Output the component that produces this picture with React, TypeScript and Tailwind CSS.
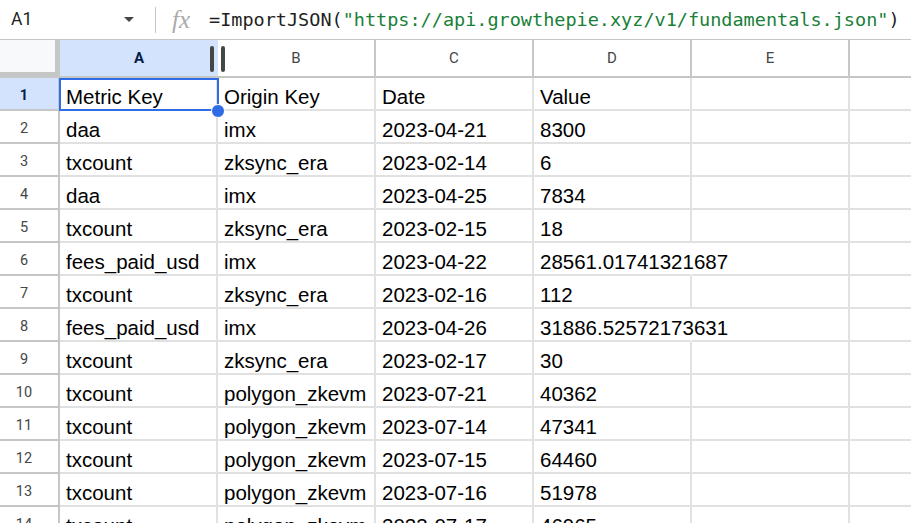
const rows: string[][] = [
  ['Metric Key', 'Origin Key', 'Date', 'Value'],
  ['daa', 'imx', '2023-04-21', '8300'],
  ['txcount', 'zksync_era', '2023-02-14', '6'],
  ['daa', 'imx', '2023-04-25', '7834'],
  ['txcount', 'zksync_era', '2023-02-15', '18'],
  ['fees_paid_usd', 'imx', '2023-04-22', '28561.01741321687'],
  ['txcount', 'zksync_era', '2023-02-16', '112'],
  ['fees_paid_usd', 'imx', '2023-04-26', '31886.52572173631'],
  ['txcount', 'zksync_era', '2023-02-17', '30'],
  ['txcount', 'polygon_zkevm', '2023-07-21', '40362'],
  ['txcount', 'polygon_zkevm', '2023-07-14', '47341'],
  ['txcount', 'polygon_zkevm', '2023-07-15', '64460'],
  ['txcount', 'polygon_zkevm', '2023-07-16', '51978'],
  ['txcount', 'polygon_zkevm', '2023-07-17', '46965'],
]

const columns = ['A', 'B', 'C', 'D', 'E']

function FormulaBar() {
  return (
    <div className="flex h-[40px] shrink-0 items-center border-b border-[#c4c7c5]">
      <div className="w-[124px] pl-[11px] text-[17.5px] text-[#1f1f1f] font-['Roboto',sans-serif]">A1</div>
      <svg width="10" height="5" viewBox="0 0 10 5" className="mb-[1px]">
        <path d="M0 0 L10 0 L5 5 Z" fill="#444746" />
      </svg>
      <div className="ml-[21px] h-[26px] w-px bg-[#c4c7c5]" />
      <span className="ml-[16px] w-[37px] font-['Liberation_Serif',serif] text-[25px] italic text-[#ababab] leading-none">
        fx
      </span>
      <div className="whitespace-nowrap font-['DejaVu_Sans_Mono',monospace] text-[18.5px] text-[#1f1f1f]">
        =ImportJSON(<span className="text-[#188038]">"https://api.growthepie.xyz/v1/fundamentals.json"</span>)
      </div>
    </div>
  )
}

function ColumnHeader() {
  return (
    <div className="flex h-[38px] shrink-0 font-['Roboto',sans-serif] text-[15px] text-[#444746]">
      <div className="w-[60px] shrink-0 border-r-[5px] border-b-[6px] border-[#c4c7c5] bg-[#f8f9fa]" />
      {columns.map(col => (
        <div
          key={col}
          className={
            col === 'A'
              ? 'relative flex w-[158px] shrink-0 items-center justify-center border-b-2 border-[#c4c7c5] bg-[#d3e3fd] font-bold text-[#041e49]'
              : 'flex w-[158px] shrink-0 items-center justify-center border-b-2 border-r-2 border-[#c4c7c5]'
          }
        >
          {col}
          {col === 'A' && (
            <>
              <div className="absolute left-[150px] top-[6px] h-[26px] w-[4px] rounded-full bg-[#444746]" />
              <div className="absolute left-[161px] top-[6px] z-10 h-[26px] w-[4px] rounded-full bg-[#444746]" />
            </>
          )}
        </div>
      ))}
      <div className="flex-1 border-b-2 border-[#c4c7c5]" />
    </div>
  )
}

function DataRow({ cells, index }: { cells: string[]; index: number }) {
  const first = index === 0
  return (
    <div className="flex h-[33px] shrink-0">
      <div
        className={
          first
            ? 'w-[60px] shrink-0 border-r-2 border-b-2 border-[#c4c7c5] bg-[#d3e3fd] pr-[10px] pt-[7px] text-center font-["Roboto",sans-serif] text-[14.5px] font-bold text-[#041e49]'
            : 'w-[60px] shrink-0 border-r-2 border-b-2 border-[#c4c7c5] pr-[10px] pt-[7px] text-center font-["Roboto",sans-serif] text-[14.5px] text-[#444746]'
        }
      >
        {index + 1}
      </div>
      {[0, 1, 2, 3, 4].map(c => {
        const text = cells[c] ?? ''
        const overflows = c === 3 && text.length > 10
        return (
          <div
            key={c}
            className={
              'relative w-[158px] shrink-0 whitespace-nowrap border-b-2 border-r-2 border-b-[#e1e1e1] pl-[6px] pt-[7px] font-["Liberation_Sans",Arial,sans-serif] text-[20.5px] leading-[24px] text-black ' +
              (overflows ? 'border-r-white' : 'border-r-[#e1e1e1]')
            }
          >
            <span className="relative z-[1]">{text}</span>
            {first && c === 0 && (
              <>
                <div className="absolute -left-[1px] top-0 h-[33px] w-[160px] border-2 border-[#2f6ce5]" />
                <div className="absolute left-[151px] top-[26px] z-10 h-[14px] w-[14px] rounded-full border border-white bg-[#2f6ce5]" />
              </>
            )}
          </div>
        )
      })}
      <div className="flex-1 border-b-2 border-[#e1e1e1]" />
    </div>
  )
}

export default function App() {
  return (
    <div className="flex h-[523px] w-[911px] flex-col overflow-hidden bg-white">
      <FormulaBar />
      <ColumnHeader />
      {rows.map((cells, i) => (
        <DataRow key={i} cells={cells} index={i} />
      ))}
    </div>
  )
}
